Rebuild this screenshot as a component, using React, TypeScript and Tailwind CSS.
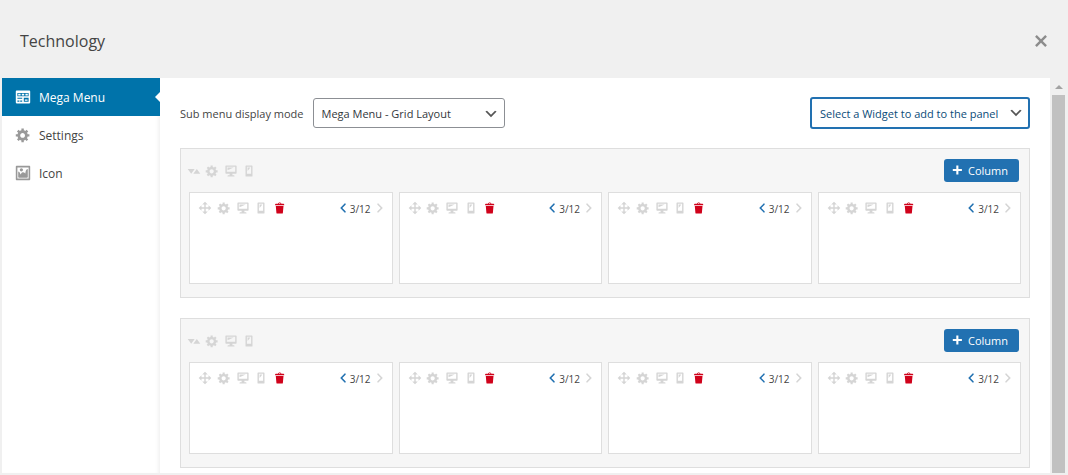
import { useState } from "react";

// 20x20 glyph outlines
const icons = {
  widgets:
    "M19 16V3c0-.55-.45-1-1-1H2c-.55 0-1 .45-1 1v14c0 .55.45 1 1 1h16c.55 0 1-.45 1-1zM3 5h14v4H3V5zm1 1v2h3V6H4zm4.5 0v2h3V6h-3zm4.5 0v2h3V6h-3zM3 11h6v1.3H3V11zm8 0h6v5h-6v-5zm1.3 2.2v1.5h3.4v-1.5h-3.4zM3 14.5h2.5V16H3v-1.5zm3.5 0H9V16H6.5v-1.5z",
  gear: "M18 12h-2.18c-.17.7-.44 1.35-.81 1.93l1.54 1.54-2.1 2.1-1.54-1.54c-.58.36-1.23.63-1.91.79V19H8v-2.18c-.68-.16-1.33-.43-1.91-.79l-1.54 1.54-2.12-2.12 1.54-1.54c-.36-.58-.63-1.23-.79-1.91H1V9.03h2.17c.16-.7.44-1.35.8-1.94L2.43 5.55l2.1-2.1 1.54 1.54c.58-.37 1.24-.64 1.93-.81V2h3v2.18c.68.16 1.33.43 1.91.79l1.54-1.54 2.12 2.12-1.54 1.54c.36.59.64 1.24.8 1.94H18V12zm-8.5 1.5c1.66 0 3-1.34 3-3s-1.34-3-3-3-3 1.34-3 3 1.34 3 3 3z",
  image:
    "M2.25 1h15.5c.69 0 1.25.56 1.25 1.25v15.5c0 .69-.56 1.25-1.25 1.25H2.25C1.56 19 1 18.44 1 17.75V2.25C1 1.56 1.56 1 2.25 1zM17 17V3H3v14h14zM10 6c0-1.1-.9-2-2-2s-2 .9-2 2 .9 2 2 2 2-.9 2-2zm3 5s0-6 3-6v10c0 .55-.45 1-1 1H5c-.55 0-1-.45-1-1V8c2 0 3 4 3 4s1-3 3-3 3 2 3 2z",
  desktop:
    "M3 2h14c.55 0 1 .45 1 1v10c0 .55-.45 1-1 1h-5v2h2c.55 0 1 .45 1 1v1H5v-1c0-.55.45-1 1-1h2v-2H3c-.55 0-1-.45-1-1V3c0-.55.45-1 1-1zm13 9V4H4v7h12zM5 5h9L5 9V5z",
  phone:
    "M6 2h8c.55 0 1 .45 1 1v14c0 .55-.45 1-1 1H6c-.55 0-1-.45-1-1V3c0-.55.45-1 1-1zm7 12V4H7v10h6zM8 5h4l-4 5V5z",
  trash:
    "M12 4h3c.6 0 1 .4 1 1v1H3V5c0-.6.5-1 1-1h3c.2-1.1 1.3-2 2.5-2s2.3.9 2.5 2zM8 4h3c-.2-.6-.9-1-1.5-1S8.2 3.4 8 4zM4 7h11l-.9 10.1c0 .5-.5.9-1 .9H5.9c-.5 0-.9-.4-1-.9L4 7z",
  move: "M19 10l-4 4v-3h-4v4h3l-4 4-4-4h3v-4H5v3l-4-4 4-4v3h4V5H6l4-4 4 4h-3v4h4V6z",
  sort: "M11 7H1l5 7zm-2 7h10l-5-7z",
  left: "M14 5l-5 5 5 5-1 2-7-7 7-7z",
  right: "M6 15l5-5-5-5 1-2 7 7-7 7z",
  plus: "M17 7v3h-5v5H9v-5H4V7h5V2h3v5h5z",
  close:
    "M14.95 6.46L11.41 10l3.54 3.54-1.41 1.41L10 11.42l-3.53 3.53-1.42-1.42L8.58 10 5.05 6.47l1.42-1.42L10 8.58l3.54-3.53z",
  down: "M5 6l5 5 5-5 2 1-7 7-7-7 2-1z",
};

type IconName = keyof typeof icons;

function Icon({ name, className }: { name: IconName; className: string }) {
  return (
    <svg viewBox="0 0 20 20" fill="currentColor" fillRule="evenodd" className={className} aria-hidden="true">
      <path d={icons[name]} />
    </svg>
  );
}

function IconButton({ name, label, className = "" }: { name: IconName; label: string; className?: string }) {
  return (
    <button type="button" aria-label={label} className={className}>
      <Icon name={name} className="size-3.5" />
    </button>
  );
}

function Column({ span }: { span: number }) {
  return (
    <div className="h-[92px] border border-[#dedede] bg-white pt-1.5 pr-[5px] pl-2">
      <div className="flex items-center justify-between">
        <div className="flex w-[89px] justify-between text-[#d5d5d5]">
          <IconButton name="move" label="Move column" />
          <IconButton name="gear" label="Column settings" />
          <IconButton name="desktop" label="Show on desktop" />
          <IconButton name="phone" label="Show on mobile" />
          <IconButton name="trash" label="Delete column" className="text-[#d0021b]" />
        </div>
        <div className="flex items-center text-[10px] leading-4 text-[#444]">
          <IconButton name="left" label="Contract" className="text-[#2271b1]" />
          <span className="pt-0.5">{span}/12</span>
          <IconButton name="right" label="Expand" className="ml-0.5 text-[#d5d5d5]" />
        </div>
      </div>
    </div>
  );
}

function Row({ columns }: { columns: number[] }) {
  return (
    <section className="border border-[#dedede] bg-[#f6f6f6] px-2 pb-[13px]">
      <div className="flex items-center justify-between py-[10px] pr-0.5">
        <div className="-ml-0.5 flex w-[69px] justify-between text-[#d5d5d5]">
          <IconButton name="sort" label="Move row" />
          <IconButton name="gear" label="Row settings" />
          <IconButton name="desktop" label="Show on desktop" />
          <IconButton name="phone" label="Show on mobile" />
        </div>
        <button
          type="button"
          className="flex h-[23px] items-center gap-1 rounded-[3px] bg-[#2271b1] pr-[11px] pl-1.5 text-white"
        >
          <Icon name="plus" className="size-3.5" />
          <span className="pt-0.5">Column</span>
        </button>
      </div>
      <div className="grid grid-cols-4 gap-1.5">
        {columns.map((span, i) => (
          <Column key={i} span={span} />
        ))}
      </div>
    </section>
  );
}

const tabs: { label: string; icon: IconName }[] = [
  { label: "Mega Menu", icon: "widgets" },
  { label: "Settings", icon: "gear" },
  { label: "Icon", icon: "image" },
];

const rows = [
  [3, 3, 3, 3],
  [3, 3, 3, 3],
];

export default function App() {
  const [active, setActive] = useState("Mega Menu");

  return (
    <div className="flex h-screen flex-col bg-[#f0f0f0] px-0.5 pb-0.5 font-['Open_Sans',sans-serif] text-xs text-[#444]">
      <header className="flex h-[78px] shrink-0 items-center justify-between pt-1 pr-[13px] pl-[18px]">
        <h1 className="text-base text-[#444]">Technology</h1>
        <button type="button" aria-label="Close" className="text-[#8c8c8c]">
          <Icon name="close" className="size-6" />
        </button>
      </header>

      <div className="flex min-h-0 flex-1">
        <nav className="w-[158px] shrink-0 bg-white shadow-[inset_-4px_0_4px_-3px_rgba(0,0,0,0.08)]">
          {tabs.map((tab) => (
            <button
              key={tab.label}
              type="button"
              onClick={() => setActive(tab.label)}
              className={
                tab.label === active
                  ? "relative flex h-[38px] w-full items-center gap-2 bg-[#0073aa] pl-[13px] text-white"
                  : "relative flex h-[38px] w-full items-center gap-2 pl-[13px] text-[#444]"
              }
            >
              <Icon name={tab.icon} className={tab.label === active ? "size-4" : "size-4 text-[#999]"} />
              <span className="pt-0.5">{tab.label}</span>
              {tab.label === active && (
                <span className="absolute top-1/2 right-0 -translate-y-1/2 border-y-[5px] border-r-[5px] border-y-transparent border-r-white" />
              )}
            </button>
          ))}
        </nav>

        <main className="min-w-0 flex-1 overflow-hidden bg-white px-5 pt-[19px] text-[11px]">
          <div className="mb-[19px] flex h-8 items-center justify-between">
            <div className="flex items-center gap-[9px]">
              <label htmlFor="mode" className="pt-0.5">
                Sub menu display mode
              </label>
              <div className="relative">
                <select
                  id="mode"
                  className="h-[30px] w-48 appearance-none rounded-[3px] border border-[#8c8f94] bg-white pt-0.5 pl-2 text-[#32373c]"
                >
                  <option>Mega Menu - Grid Layout</option>
                  <option>Mega Menu - Standard Layout</option>
                  <option>Flyout Menu</option>
                </select>
                <Icon name="down" className="pointer-events-none absolute top-2 right-1.5 size-4 text-[#555]" />
              </div>
            </div>
            <div className="relative">
              <select
                aria-label="Widget"
                className="h-8 w-[220px] appearance-none rounded-[3px] border-2 border-[#2271b1] bg-white pt-0.5 pl-2 text-[#0a4b78]"
              >
                <option>Select a Widget to add to the panel</option>
              </select>
              <Icon name="down" className="pointer-events-none absolute top-2 right-1.5 size-4 text-[#555]" />
            </div>
          </div>
          <div className="flex flex-col gap-5">
            {rows.map((columns, i) => (
              <Row key={i} columns={columns} />
            ))}
          </div>
        </main>

        {/* scroll track */}
        <div className="flex w-4 shrink-0 flex-col items-center bg-[#f0f0f0] pr-px pl-0.5">
          <div className="flex h-[17px] items-center">
            <span className="border-x-4 border-b-4 border-x-transparent border-b-[#a3a3a3]" />
          </div>
          <div className="w-full flex-1 bg-[#c1c1c1]" />
        </div>
      </div>
    </div>
  );
}
